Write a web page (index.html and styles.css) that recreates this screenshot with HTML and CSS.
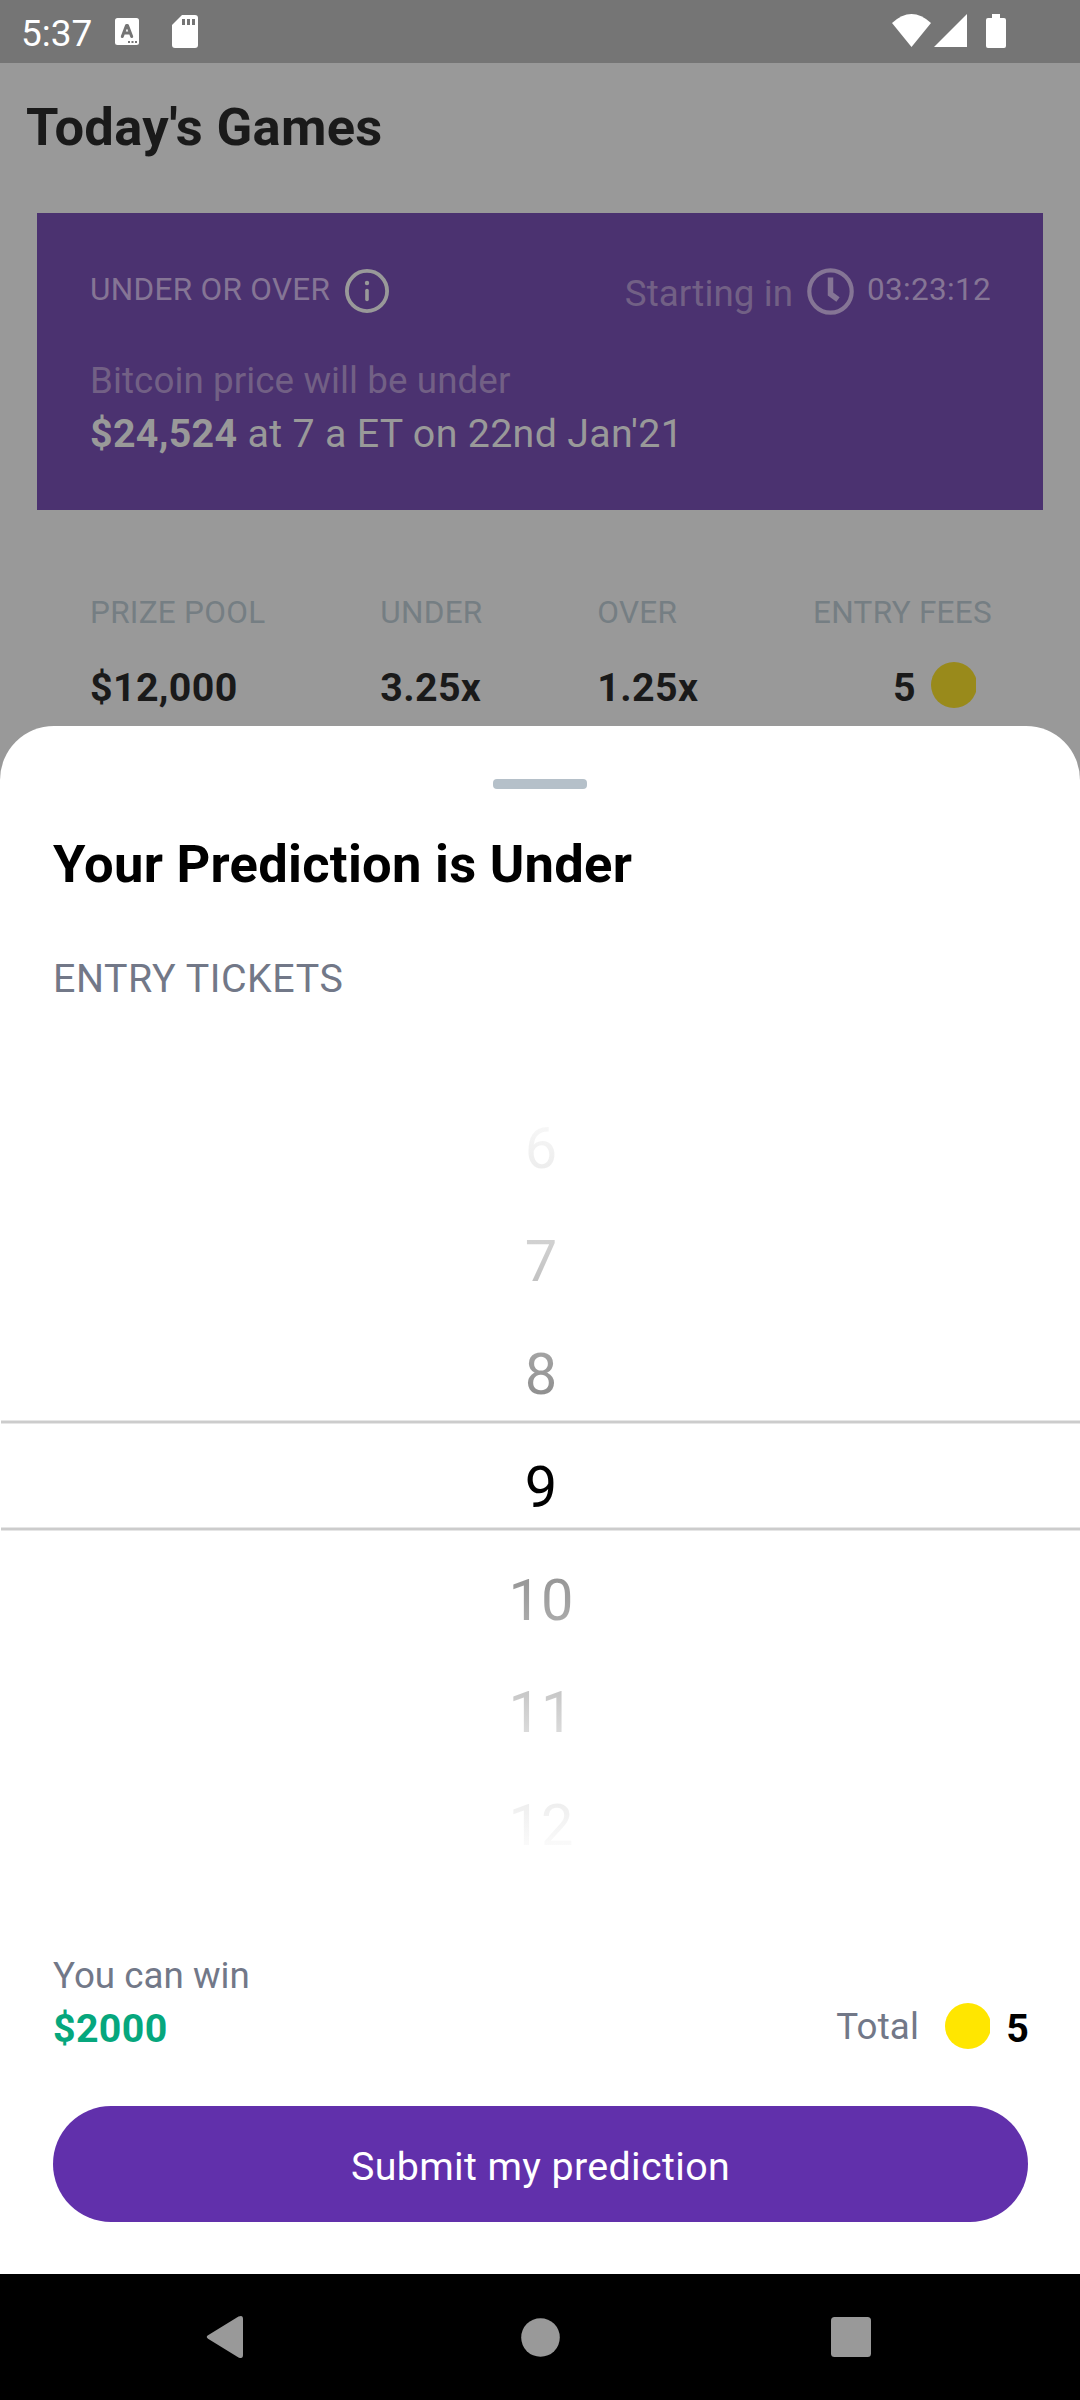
FILE: index.html
```html
<!DOCTYPE html>
<html lang="en">
<head>
<meta charset="utf-8">
<title>Today's Games</title>
<link rel="stylesheet" href="styles.css">
</head>
<body>
<div class="phone">
  <header class="status">
    <span class="time">5:37</span>
    <svg class="ic-lang" width="24" height="27" viewBox="0 0 24 27">
      <rect width="24" height="27" rx="2.500" fill="#fff"/>
      <path d="M7.300 18.500L11.500 7.500H12.500L16.700 18.500M9 15H15" fill="none" stroke="#757575" stroke-width="3" stroke-linecap="round" stroke-linejoin="round"/>
      <path d="M13 23h2v2h-2zM16.500 23h2v2h-2zM20 23h2v2h-2z" fill="#757575"/>
    </svg>
    <svg class="ic-sd" width="26" height="33" viewBox="0 0 26 33">
      <path d="M10 0H23Q26 0 26 3V30Q26 33 23 33H3Q0 33 0 30V10Z" fill="#fff"/>
      <path d="M10 4h3v6h-3zM15 4h3v6h-3zM20 4h3v6h-3z" fill="#757575"/>
    </svg>
    <svg class="ic-net" width="116" height="36" viewBox="0 0 116 36">
      <path d="M0 9Q19.500 -9 39 9L19.500 33Z" fill="#fff"/>
      <path d="M42 33L75 0V33Z" fill="#fff"/>
      <path d="M100 0h8v4h4q2 0 2 2v26q0 2 -2 2h-16q-2 0 -2 -2V6q0 -2 2 -2h4z" fill="#fff"/>
    </svg>
  </header>

  <main class="games">
    <h1 class="page-title">Today's Games</h1>
    <section class="card">
      <div class="card-top">
        <span class="label">UNDER OR OVER</span>
        <svg class="ic-info" width="44" height="44" viewBox="0 0 44 44">
          <circle cx="22" cy="22" r="20.100" fill="none" stroke="#999" stroke-width="3.800"/>
          <circle cx="22" cy="14" r="2.200" fill="#999"/>
          <path d="M22 21.500V30.500" stroke="#999" stroke-width="3.600" stroke-linecap="round"/>
        </svg>
        <span class="starting">Starting in</span>
        <svg class="ic-clock" width="47" height="47" viewBox="0 0 47 47">
          <circle cx="23.500" cy="23.500" r="21.200" fill="none" stroke="#857595" stroke-width="4.200"/>
          <path d="M23.500 9.500V26L31 31.500" fill="none" stroke="#857595" stroke-width="5.500"/>
        </svg>
        <span class="label countdown">03:23:12</span>
      </div>
      <p class="question">Bitcoin price will be under</p>
      <p class="answer"><b>$24,524</b> at 7 a ET on 22nd Jan'21</p>
    </section>
    <section class="stats">
      <div class="stat"><span class="stat-name">PRIZE POOL</span><b>$12,000</b></div>
      <div class="stat"><span class="stat-name">UNDER</span><b>3.25x</b></div>
      <div class="stat"><span class="stat-name">OVER</span><b>1.25x</b></div>
      <div class="stat fees"><span class="stat-name">ENTRY FEES</span>
        <div class="fee"><b>5</b><svg width="45" height="46" viewBox="0 0 45 46"><circle cx="23" cy="23" r="23" fill="#998a1b"/></svg></div>
      </div>
    </section>
  </main>

  <section class="sheet">
    <div class="handle"></div>
    <h2 class="sheet-title">Your Prediction is Under</h2>
    <p class="sheet-label">ENTRY TICKETS</p>
    <div class="picker">
      <span class="num n6">6</span>
      <span class="num n7">7</span>
      <span class="num n8">8</span>
      <span class="num n9">9</span>
      <span class="num n10">10</span>
      <span class="num n11">11</span>
      <span class="num n12">12</span>
      <div class="selection"></div>
    </div>
    <div class="summary">
      <div class="win"><span>You can win</span><b>$2000</b></div>
      <div class="total"><span>Total</span><svg width="45" height="46" viewBox="0 0 45 46"><circle cx="23" cy="23" r="23" fill="#ffe600"/></svg><b>5</b></div>
    </div>
    <button class="submit">Submit my prediction</button>
  </section>

  <nav class="navbar">
    <svg width="38" height="44" viewBox="0 0 38 44"><path d="M2 20.300L32.500 1.600Q37 -0.500 37 4V40Q37 44.500 32.500 42.400L2 23.700Q-0.500 22 2 20.300Z" fill="#999"/></svg>
    <svg class="home" width="39" height="39" viewBox="0 0 39 39"><circle cx="19.500" cy="19.500" r="19.300" fill="#999"/></svg>
    <svg width="40" height="40" viewBox="0 0 40 40"><rect width="40" height="40" rx="3.500" fill="#999"/></svg>
  </nav>
</div>
</body>
</html>
```
FILE: styles.css
```css
* { box-sizing: border-box; margin: 0; padding: 0; }
body { width: 1080px; height: 2400px; overflow: hidden; font-family: Roboto, sans-serif; background: #999; }
svg { display: block; flex: none; }
.phone { width: 1080px; height: 2400px; display: flex; flex-direction: column; }

.status { height: 63px; flex: none; background: #757575; display: flex; align-items: flex-start; padding-left: 21px; }
.time { width: 94px; font-size: 37px; line-height: 43px; padding-top: 12px; color: #fff; white-space: nowrap; }
.ic-lang { margin-top: 18px; }
.ic-sd { margin: 15px 0 0 33px; }
.ic-net { margin: 14px 72px 0 auto; }

.games { height: 663px; flex: none; background: #999; color: #1a1a1a; }
.page-title { height: 150px; padding: 33px 0 0 26px; font-size: 52.5px; line-height: 62px; font-weight: 700; letter-spacing: 0.3px; }
.card { height: 297px; margin: 0 37px; padding: 54px 52px 0 53px; background: #4b3270; }
.card-top { display: flex; height: 48px; align-items: flex-start; }
.label { font-size: 31.5px; line-height: 37px; padding-top: 4px; color: #857595; white-space: nowrap; letter-spacing: 0.3px; }
.ic-info { margin: 2px 0 0 15px; }
.starting { margin-left: auto; padding-top: 5px; font-size: 36.75px; line-height: 43px; color: #726085; white-space: nowrap; letter-spacing: 0.08px; }
.ic-clock { margin: 1px 13px 0 14px; }
.question { margin-top: 44px; font-size: 36.75px; line-height: 43px; color: #726085; letter-spacing: 0.08px; }
.answer { margin-top: 8px; font-size: 39.375px; line-height: 47px; color: #999; letter-spacing: 0.31px; }
.stats { display: flex; justify-content: space-between; padding: 84px 88px 0 90px; }
.stat { display: flex; flex-direction: column; font-size: 39.375px; line-height: 46px; letter-spacing: 0.36px; }
.stat-name { font-size: 31.5px; line-height: 37px; margin-bottom: 34px; color: #757e83; letter-spacing: 0.28px; }
.fees { align-items: flex-end; }
.fee { display: flex; gap: 15px; padding-right: 16px; }
.fee svg { margin-top: -3px; }

.sheet { height: 1548px; flex: none; display: flex; flex-direction: column; background: #fff; border-radius: 54px 54px 0 0; }
.handle { width: 94px; height: 10px; margin: 53px auto 0; border-radius: 4px; background: #b5c0c9; flex: none; }
.sheet-title { margin: 44px 53px 0; font-size: 52.5px; line-height: 62px; font-weight: 700; color: #000; letter-spacing: 0.27px; }
.sheet-label { margin: 61px 53px 0; font-size: 39.375px; line-height: 46px; color: #727888; letter-spacing: 0.55px; }
.picker { position: relative; height: 790px; margin-top: 90px; padding: 0.4px 0 0 2px; display: grid; grid-template-rows: repeat(7, 112.8px); text-align: center; font-size: 57.75px; line-height: 112.8px; }
.num { background-clip: text; -webkit-background-clip: text; color: transparent; }
.n6 { background-image: linear-gradient(#f8f8f8 25%, #ebebeb 75%); }
.n7 { background-image: linear-gradient(#d4d4d4 25%, #bfbfbf 75%); }
.n8 { background-image: linear-gradient(#a6a6a6 25%, #8c8c8c 75%); }
.n9 { color: #000; }
.n10 { background-image: linear-gradient(#949494 25%, #adadad 75%); }
.n11 { background-image: linear-gradient(#c4c4c4 25%, #dedede 75%); }
.n12 { background-image: linear-gradient(#ededed 25%, #fcfcfc 75%); }
/* Soft-edged rules above and below the chosen number. */
.selection {
  position: absolute; left: 1px; right: 0; top: 328px; height: 111px;
  background: linear-gradient(#e6e6e6 1px, #ccc 1px 3px, #e6e6e6 3px 4px, transparent 4px 107px, #e6e6e6 107px 108px, #ccc 108px 110px, #e6e6e6 110px);
}
.summary { display: flex; justify-content: space-between; height: 100px; margin: 72px 51px 0 53px; color: #727888; font-size: 36.75px; }
.win { display: flex; flex-direction: column; line-height: 43px; }
.win b { margin-top: 9px; font-size: 39.375px; line-height: 46px; color: #06a77d; letter-spacing: 0.33px; }
.total { display: flex; align-items: flex-start; padding-top: 49px; line-height: 43px; letter-spacing: 0.2px; }
.total span { padding-top: 2px; }
.total svg { margin: 0 16px 0 26px; }
.total b { font-size: 39.375px; line-height: 46px; padding-top: 3px; color: #000; }
.submit { height: 116px; flex: none; margin: 52px 52px 0 53px; border: 0; border-radius: 58px; background: #6130ab; color: #fff; font: 39.375px/46px Roboto, sans-serif; letter-spacing: 0.37px; padding-top: 5px; }

.navbar { flex: 1; display: flex; align-items: center; background: #000; padding-left: 206px; }
.home { margin: 0 271px 0 277px; }
```
